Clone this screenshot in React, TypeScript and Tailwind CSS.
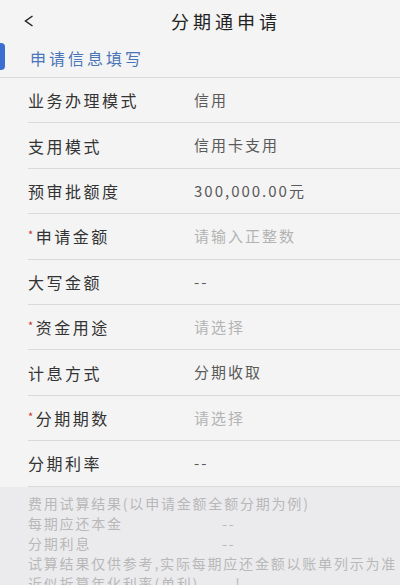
import React from "react";

type Row = {
  label: string;
  value: string;
  required?: boolean;
  placeholder?: boolean;
};

const rows: Row[] = [
  { label: "业务办理模式", value: "信用" },
  { label: "支用模式", value: "信用卡支用" },
  { label: "预审批额度", value: "300,000.00元" },
  { label: "申请金额", value: "请输入正整数", required: true, placeholder: true },
  { label: "大写金额", value: "--" },
  { label: "资金用途", value: "请选择", required: true, placeholder: true },
  { label: "计息方式", value: "分期收取" },
  { label: "分期期数", value: "请选择", required: true, placeholder: true },
  { label: "分期利率", value: "--" },
];

const trial: { label: string; value?: string }[] = [
  { label: "费用试算结果(以申请金额全额分期为例)" },
  { label: "每期应还本金", value: "--" },
  { label: "分期利息", value: "--" },
  { label: "试算结果仅供参考,实际每期应还金额以账单列示为准" },
  { label: "近似折算年化利率(单利)", value: "--!" },
];

const App: React.FC = () => {
  return (
    <div className="w-[400px] h-[585px] overflow-hidden bg-[#f4f4f4] font-['Noto_Sans_CJK_SC','Noto_Sans',sans-serif]">
      {/* header */}
      <div className="flex items-center h-[41px]">
        <div className="w-[52px] pl-[24px] flex items-center">
          <svg width="10" height="12" viewBox="0 0 10 12" fill="none">
            <polyline
              points="8.5,1 1.5,6 8.5,11"
              stroke="#222"
              strokeWidth="1.5"
            />
          </svg>
        </div>
        <div className="flex-1 text-center text-[18px] tracking-[4px] text-[#222] leading-none">
          分期通申请
        </div>
      </div>

      {/* section title */}
      <div className="relative flex items-center h-[37px] pb-[3px] border-b border-[#dadada]">
        <div className="absolute left-0 top-[2px] w-[5px] h-[27px] rounded-r-[4px] bg-[#3b6ed0]" />
        <span className="pl-[30px] text-[16px] tracking-[3px] text-[#4a76b8]">
          申请信息填写
        </span>
      </div>

      {/* form rows */}
      <div className="pl-[28px]">
        {rows.map((r) => (
          <div
            key={r.label}
            className="flex items-center h-[45.4px] border-b border-[#dadada]"
          >
            <div className="w-[166px] flex items-center text-[16px] tracking-[2.5px] text-[#333]">
              {r.required && (
                <span className="text-[11px] text-[#c9302c] -mt-[4px]">*</span>
              )}
              {r.label}
            </div>
            <div
              className={`text-[15px] tracking-[2px] ${
                r.placeholder ? "text-[#b3b3b3]" : "text-[#5a5a5a]"
              }`}
            >
              {r.value}
            </div>
          </div>
        ))}
      </div>

      {/* trial calc */}
      <div className="bg-[#ebebed] pl-[28px] pt-[6px] text-[14px] leading-[20px] tracking-[1.8px] text-[#b8b8b8] whitespace-nowrap">
        {trial.map((t) => (
          <div key={t.label} className="flex">
            <span className="min-w-[194px]">{t.label}</span>
            {t.value && <span>{t.value}</span>}
          </div>
        ))}
      </div>
    </div>
  );
};

export default App;
